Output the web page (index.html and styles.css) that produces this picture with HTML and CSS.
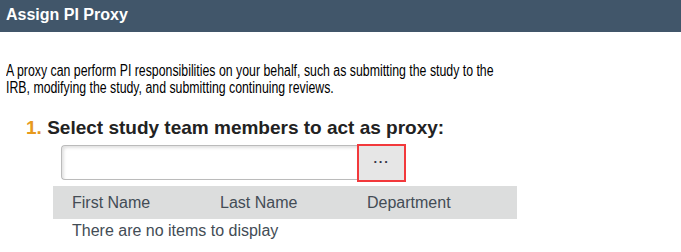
FILE: index.html
```html
<!DOCTYPE html>
<html>
  <head>
    <title>Assign PI Proxy</title>
    <link rel="stylesheet" href="styles.css">
  </head>
  <body>
    <div class="title-bar">Assign PI Proxy</div>

    <div class="content">
      <p class="intro">A proxy can perform PI responsibilities on your behalf, such as submitting the study to the IRB, modifying the study, and submitting continuing reviews.</p>

      <h2 class="step"><span class="step-num">1.</span> Select study team members to act as proxy:</h2>

      <div class="picker">
        <input type="text" class="picker-input">
        <button class="picker-btn" type="button">&middot;&middot;&middot;</button>
      </div>

      <table class="people">
        <thead>
          <tr>
            <th class="col-first">First Name</th>
            <th class="col-last">Last Name</th>
            <th class="col-dept">Department</th>
          </tr>
        </thead>
        <tbody>
          <tr>
            <td colspan="3" class="empty">There are no items to display</td>
          </tr>
        </tbody>
      </table>
    </div>
  </body>
</html>
```

FILE: styles.css
```css
body {
  margin: 0;
  font-family: "Liberation Sans", Arial, sans-serif;
  color: #000;
  background: #fff;
}

.title-bar {
  background-color: #41566a;
  color: #fff;
  font-weight: bold;
  font-size: 16px;
  height: 32px;
  line-height: 29px;
  padding-left: 6px;
}

.content {
  padding: 0 6px;
}

/* the original face is a condensed Arial; squeeze the regular one */
.intro {
  margin: 30px 0 0;
  font-size: 16px;
  line-height: 17px;
  width: 636px;
  transform: scaleX(0.77);
  transform-origin: left top;
}

.step {
  margin: 20px 0 0 20px;
  font-size: 19px;
  line-height: 24px;
  color: #222;
}

.step-num {
  color: #e79a1d;
}

.picker {
  display: flex;
  margin: 4px 0 0 55px;
}

.picker-input {
  box-sizing: border-box;
  width: 296px;
  height: 35px;
  border: 1px solid #bbb;
  border-right: none;
  border-radius: 4px 0 0 4px;
  box-shadow: inset 2px 2px 3px #e2e2e2;
  margin: 1px 0 0;
}

.picker-btn {
  box-sizing: border-box;
  width: 49px;
  height: 38px;
  background: #e6e6e6;
  border: 2px solid #f2393c;
  color: #334;
  font-size: 13px;
  font-weight: bold;
  letter-spacing: 1px;
  padding: 0 0 4px;
  font-family: "Liberation Sans", Arial, sans-serif;
}

.people {
  border-collapse: collapse;
  margin: 4px 0 0 47px;
  width: 464px;
  font-size: 16px;
  color: #434c55;
}

.people th {
  background: #dcdddd;
  font-weight: normal;
  text-align: left;
  height: 33px;
  padding: 0;
}

.col-first {
  padding-left: 19px !important;
  width: 148px;
}

.col-last {
  width: 147px;
}

.people td.empty {
  padding: 3px 0 0 19px;
  line-height: 18px;
}
```
